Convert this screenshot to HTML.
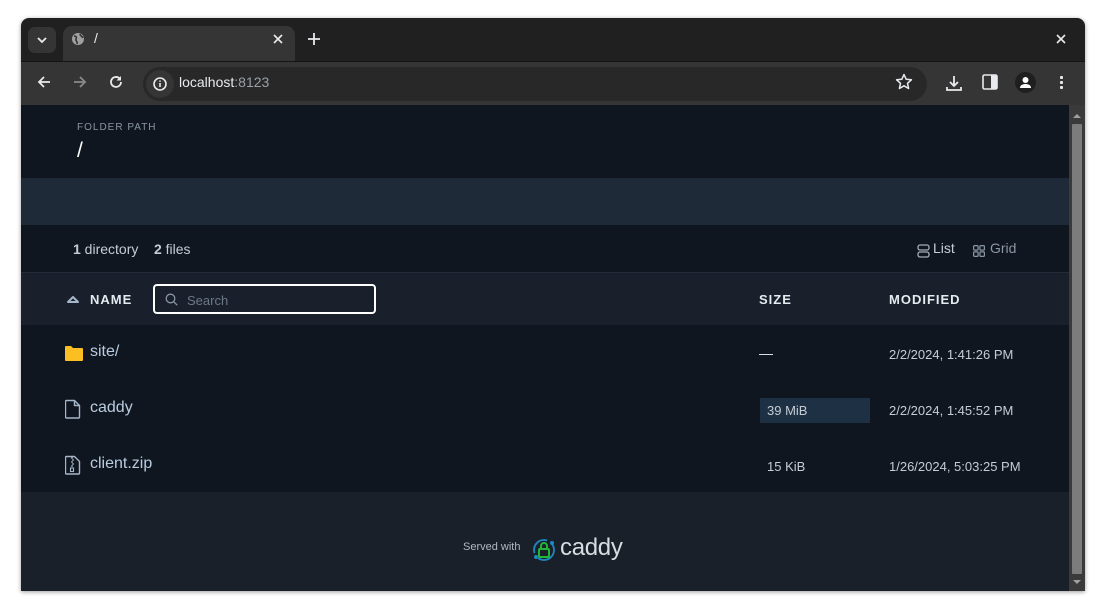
<!DOCTYPE html>
<html><head><meta charset="utf-8"><style>
*{margin:0;padding:0;box-sizing:border-box}
body{width:1106px;height:615px;background:#fff;position:relative;overflow:hidden;font-family:"Liberation Sans",sans-serif}
.win{position:absolute;left:21px;top:18px;width:1064px;height:573px;background:#202020;border-radius:8px 8px 0 0;overflow:hidden;box-shadow:0 1px 4px rgba(0,0,0,.4)}
.abs{position:absolute}
.t{color:#e8eaed}
</style></head><body>
<div class="win">
 <div class="abs" style="left:7px;top:9px;width:28px;height:26px;background:#353535;border-radius:7px"></div>
 <svg class="abs" style="left:15px;top:17px" width="12" height="10"><path d="M2 3l4 4 4-4" stroke="#e8eaed" stroke-width="1.8" fill="none"/></svg>
 <div class="abs" style="left:42px;top:8px;width:232px;height:40px;background:#353535;border-radius:9px 9px 0 0"></div>
 <svg class="abs" style="left:50px;top:14px" width="14" height="14"><circle cx="7" cy="7" r="6" fill="#a0a0a0"/><path d="M3 4c2 0 3 1 2 3s2 2 1 5M9 2c0 2 2 2 3 4" stroke="#353535" stroke-width="1.6" fill="none"/></svg>
 <div class="abs t" style="left:73px;top:12px;font-size:14px">/</div>
 <svg class="abs" style="left:252px;top:16px" width="10" height="10"><path d="M1 1l8 8M9 1l-8 8" stroke="#e8eaed" stroke-width="1.6"/></svg>
 <svg class="abs" style="left:287px;top:15px" width="12" height="12"><path d="M6 0v12M0 6h12" stroke="#e8eaed" stroke-width="1.8"/></svg>
 <svg class="abs" style="left:1035px;top:16px" width="10" height="10"><path d="M1 1l8 8M9 1l-8 8" stroke="#e8eaed" stroke-width="1.6"/></svg>
 <div class="abs" style="left:0;top:43px;width:1064px;height:44px;background:#353535;border-top:1px solid #141414"></div>
 <svg class="abs" style="left:16px;top:57px" width="14" height="14"><path d="M13 7H2M7 2L2 7l5 5" stroke="#e8eaed" stroke-width="1.8" fill="none"/></svg>
 <svg class="abs" style="left:52px;top:57px" width="14" height="14"><path d="M1 7h11M7 2l5 5-5 5" stroke="#8a8a8a" stroke-width="1.8" fill="none"/></svg>
 <svg class="abs" style="left:88px;top:57px" width="14" height="14"><path d="M12 7a5 5 0 1 1-1.5-3.6" stroke="#e8eaed" stroke-width="1.8" fill="none"/><path d="M12 1v4.5H7.5z" fill="#e8eaed"/></svg>
 <div class="abs" style="left:122px;top:49px;width:784px;height:34px;background:#282828;border-radius:17px"></div>
 <div class="abs" style="left:125px;top:52px;width:28px;height:28px;background:#353535;border-radius:14px"></div>
 <svg class="abs" style="left:132px;top:59px" width="14" height="14"><circle cx="7" cy="7" r="6" fill="none" stroke="#e8eaed" stroke-width="1.6"/><path d="M7 6v4M7 3.5v1.2" stroke="#e8eaed" stroke-width="1.6"/></svg>
 <div class="abs" style="left:158px;top:56px;font-size:14px;color:#e8eaed">localhost<span style="color:#9aa0a6">:8123</span></div>
 <svg class="abs" style="left:874px;top:55px" width="18" height="18"><path d="M9 1.5l2.2 4.8 5.2.5-3.9 3.5 1.1 5.2L9 12.8l-4.6 2.7 1.1-5.2L1.6 6.8l5.2-.5z" fill="none" stroke="#e8eaed" stroke-width="1.5" stroke-linejoin="round"/></svg>
 <svg class="abs" style="left:924px;top:56px" width="18" height="18"><path d="M9 2v10M5 8l4 4 4-4M2 13v3h14v-3" stroke="#e8eaed" stroke-width="1.8" fill="none"/></svg>
 <svg class="abs" style="left:961px;top:56px" width="16" height="16"><rect x="1" y="1" width="14" height="14" rx="1.5" fill="none" stroke="#e8eaed" stroke-width="1.6"/><rect x="9" y="1" width="6" height="14" fill="#e8eaed"/></svg>
 <div class="abs" style="left:994px;top:54px;width:21px;height:21px;border-radius:50%;background:#1f1f1f"></div>
 <svg class="abs" style="left:997px;top:57px" width="15" height="15"><circle cx="7.5" cy="5" r="3" fill="#fff"/><path d="M2 13c0-3 3-4 5.5-4s5.5 1 5.5 4z" fill="#fff"/></svg>
 <div class="abs" style="left:1039px;top:57px;width:3px;height:14px;background:radial-gradient(circle,#e8eaed 1.5px,transparent 1.6px) 0 0/3px 5px"></div>
 <div class="abs" style="left:0;top:87px;width:1048px;height:486px;background:#101620">
  <div class="abs" style="left:56px;top:17px;font-size:10px;letter-spacing:1px;color:#8a96a3">FOLDER PATH</div>
  <div class="abs" style="left:56px;top:34px;font-size:21px;color:#fff">/</div>
  <div class="abs" style="left:0;top:73px;width:1048px;height:47px;background:#1e2a38"></div>
  <div class="abs" style="left:52px;top:136px;font-size:14px;color:#c4ccd6"><b>1</b> directory &nbsp;&nbsp; <b>2</b> files</div>
  <svg class="abs" style="left:896px;top:139px" width="13" height="14"><rect x="1" y="1" width="11" height="5" rx="2" fill="none" stroke="#a4adb8" stroke-width="1.3"/><rect x="1" y="8" width="11" height="5" rx="2" fill="none" stroke="#a4adb8" stroke-width="1.3"/></svg>
  <div class="abs" style="left:912px;top:135px;font-size:14px;color:#c4ccd6">List</div>
  <svg class="abs" style="left:952px;top:140px" width="12" height="12" fill="none" stroke="#8a96a3" stroke-width="1.2"><rect x=".6" y=".6" width="4.5" height="4.5" rx="1"/><rect x="6.9" y=".6" width="4.5" height="4.5" rx="1"/><rect x=".6" y="6.9" width="4.5" height="4.5" rx="1"/><rect x="6.9" y="6.9" width="4.5" height="4.5" rx="1"/></svg>
  <div class="abs" style="left:969px;top:135px;font-size:14px;color:#8a96a3">Grid</div>
  <div class="abs" style="left:0;top:167px;width:1048px;height:53px;background:#19202b;border-top:1px solid #222b37"></div>
  <svg class="abs" style="left:45px;top:189px" width="14" height="10"><path d="M2 8L7 3l5 5z" fill="none" stroke="#a4b6c8" stroke-width="2" stroke-linejoin="round"/></svg>
  <div class="abs" style="left:69px;top:187px;font-size:13px;font-weight:bold;letter-spacing:1px;color:#e6ebf0">NAME</div>
  <div class="abs" style="left:132px;top:179px;width:223px;height:30px;border:2px solid #fff;border-radius:4px;background:#19202b"></div>
  <svg class="abs" style="left:144px;top:188px" width="13" height="13"><circle cx="5.5" cy="5.5" r="4.3" fill="none" stroke="#8a96a3" stroke-width="1.3"/><path d="M8.7 8.7l3.5 3.5" stroke="#8a96a3" stroke-width="1.3"/></svg>
  <div class="abs" style="left:166px;top:188px;font-size:13px;color:#6d7886">Search</div>
  <div class="abs" style="left:738px;top:187px;font-size:13px;font-weight:bold;letter-spacing:1px;color:#e6ebf0">SIZE</div>
  <div class="abs" style="left:868px;top:187px;font-size:13px;font-weight:bold;letter-spacing:1px;color:#e6ebf0">MODIFIED</div>
  <svg class="abs" style="left:43px;top:240px" width="20" height="17"><path d="M1 2q0-1 1-1h5l2 2h9q1 0 1 1v11q0 1-1 1H2q-1 0-1-1z" fill="#fbbf24"/></svg>
  <div class="abs" style="left:69px;top:238px;font-size:16px;color:#b8cce0">site/</div>
  <div class="abs" style="left:738px;top:240px;font-size:14px;color:#e6ebf0">—</div>
  <div class="abs" style="left:868px;top:242px;font-size:13px;color:#c4ccd6">2/2/2024, 1:41:26 PM</div>
  <svg class="abs" style="left:44px;top:294px" width="16" height="20"><path d="M1.5 1.5h8l5 5v11.5q0 1-1 1h-12q-1 0-1-1v-15.5q0-1 1-1zM9.5 1.5v5h5" fill="none" stroke="#a4b6c8" stroke-width="1.4" stroke-linejoin="round"/></svg>
  <div class="abs" style="left:69px;top:294px;font-size:16px;color:#b8cce0">caddy</div>
  <div class="abs" style="left:739px;top:293px;width:110px;height:25px;background:#1e3044"></div>
  <div class="abs" style="left:746px;top:298px;font-size:13px;color:#c4ccd6">39 MiB</div>
  <div class="abs" style="left:868px;top:298px;font-size:13px;color:#c4ccd6">2/2/2024, 1:45:52 PM</div>
  <svg class="abs" style="left:44px;top:350px" width="16" height="20"><path d="M1.5 1.5h8l5 5v11.5q0 1-1 1h-12q-1 0-1-1v-15.5q0-1 1-1z" fill="none" stroke="#a4b6c8" stroke-width="1.4" stroke-linejoin="round"/><path d="M6 3h2M7 5h2M6 7h2M7 9h2M6 11h2" stroke="#a4b6c8" stroke-width="1.2"/><rect x="5.5" y="13" width="3" height="3.5" fill="none" stroke="#a4b6c8" stroke-width="1.1"/></svg>
  <div class="abs" style="left:69px;top:350px;font-size:16px;color:#b8cce0">client.zip</div>
  <div class="abs" style="left:746px;top:354px;font-size:13px;color:#c4ccd6">15 KiB</div>
  <div class="abs" style="left:868px;top:354px;font-size:13px;color:#c4ccd6">1/26/2024, 5:03:25 PM</div>
  <div class="abs" style="left:0;top:387px;width:1048px;height:99px;background:#1a202a"></div>
  <div class="abs" style="left:442px;top:436px;font-size:11px;color:#b0b8c2">Served with</div>
  <svg class="abs" style="left:510px;top:432px" width="26" height="26"><circle cx="13" cy="13" r="10" fill="none" stroke="#1f88c0" stroke-width="1.8" stroke-dasharray="22 6"/><rect x="8" y="12" width="10" height="8" rx="1" fill="none" stroke="#22b638" stroke-width="2"/><path d="M10 12V9a3 3 0 0 1 6 0v3" fill="none" stroke="#22b638" stroke-width="2"/><circle cx="5" cy="20" r="2" fill="#1f88c0"/><circle cx="21" cy="6" r="2" fill="#1f88c0"/></svg>
  <div class="abs" style="left:539px;top:429px;font-size:24px;color:#d8dde2;letter-spacing:-0.3px">caddy</div>
 </div>
 <div class="abs" style="left:1048px;top:87px;width:16px;height:486px;background:#3a3a3a"></div>
 <div class="abs" style="left:1051px;top:106px;width:10px;height:450px;background:#7c7c7c;border-radius:1px"></div>
 <svg class="abs" style="left:1051px;top:94px" width="10" height="8"><path d="M1 6l4-4 4 4z" fill="#a0a0a0"/></svg>
 <svg class="abs" style="left:1051px;top:560px" width="10" height="8"><path d="M1 2l4 4 4-4z" fill="#a0a0a0"/></svg>
</div>
</body></html>
